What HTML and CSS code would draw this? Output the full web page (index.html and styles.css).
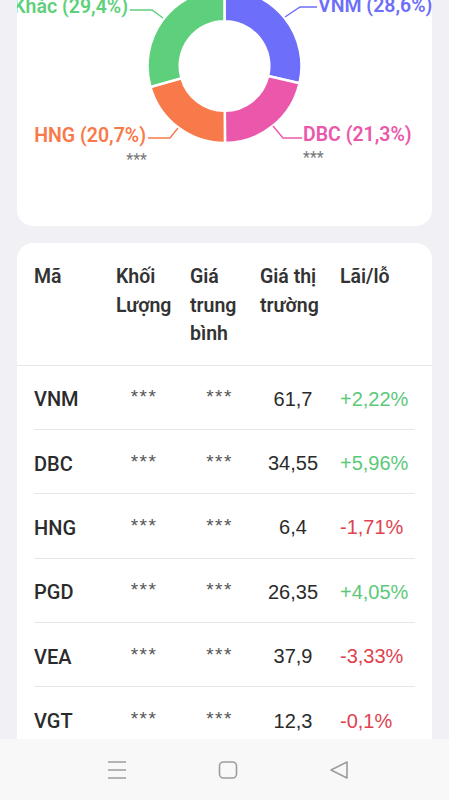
FILE: index.html
```html
<!DOCTYPE html>
<html lang="vi">
<head>
  <meta charset="UTF-8">
  <title>Danh mục</title>
  <link rel="stylesheet" href="styles.css">
</head>
<body>

  <div class="page">

    <section class="card chart-card">
      <svg class="donut" width="415" height="226" viewBox="0 0 415 226">
        <g class="slices">
          <path fill="#6d6ef9" d="M207.5 -11 A77 77 0 0 1 282.54 83.27 L251.16 76.05 A44.8 44.8 0 0 0 207.5 21.2 Z"/>
          <path fill="#eb58ab" d="M282.54 83.27 A77 77 0 0 1 207.98 143 L207.78 110.8 A44.8 44.8 0 0 0 251.16 76.05 Z"/>
          <path fill="#f87a4a" d="M207.98 143 A77 77 0 0 1 133.43 87.02 L164.4 78.23 A44.8 44.8 0 0 0 207.78 110.8 Z"/>
          <path fill="#5ed07b" d="M133.43 87.02 A77 77 0 0 1 207.5 -11 L207.5 21.2 A44.8 44.8 0 0 0 164.4 78.23 Z"/>
        </g>
        <g class="leaders">
          <polyline stroke="#5ed07b" points="113,10 135,10 146,18"/>
          <polyline stroke="#6d6ef9" points="300,7 283,7 268,17"/>
          <polyline stroke="#f87a4a" points="131,138 153,138 161,128"/>
          <polyline stroke="#eb58ab" points="285,138 266,138 256,126"/>
        </g>
        <text class="lbl" fill="#5ed07b" x="111" y="13" text-anchor="end">Khác (29,4%)</text>
        <text class="lbl" fill="#6d6ef9" x="301" y="12">VNM (28,6%)</text>
        <text class="lbl" fill="#f87a4a" x="129" y="142" text-anchor="end">HNG (20,7%)</text>
        <text class="lbl" fill="#eb58ab" x="286" y="141">DBC (21,3%)</text>
        <text class="hidden-val" x="130" y="165" text-anchor="end">***</text>
        <text class="hidden-val" x="286" y="163">***</text>
      </svg>
    </section>

    <section class="card holdings">
      <div class="thead">
        <div>Mã</div>
        <div>Khối Lượng</div>
        <div>Giá trung bình</div>
        <div>Giá thị trường</div>
        <div>Lãi/lỗ</div>
      </div>

      <div class="row">
        <div class="code">VNM</div>
        <div class="mask">***</div>
        <div class="mask">***</div>
        <div class="price">61,7</div>
        <div class="pl up">+2,22%</div>
      </div>
      <div class="row">
        <div class="code">DBC</div>
        <div class="mask">***</div>
        <div class="mask">***</div>
        <div class="price">34,55</div>
        <div class="pl up">+5,96%</div>
      </div>
      <div class="row">
        <div class="code">HNG</div>
        <div class="mask">***</div>
        <div class="mask">***</div>
        <div class="price">6,4</div>
        <div class="pl down">-1,71%</div>
      </div>
      <div class="row">
        <div class="code">PGD</div>
        <div class="mask">***</div>
        <div class="mask">***</div>
        <div class="price">26,35</div>
        <div class="pl up">+4,05%</div>
      </div>
      <div class="row">
        <div class="code">VEA</div>
        <div class="mask">***</div>
        <div class="mask">***</div>
        <div class="price">37,9</div>
        <div class="pl down">-3,33%</div>
      </div>
      <div class="row">
        <div class="code">VGT</div>
        <div class="mask">***</div>
        <div class="mask">***</div>
        <div class="price">12,3</div>
        <div class="pl down">-0,1%</div>
      </div>
    </section>

  </div>

  <nav class="navbar">
    <svg width="24" height="24" viewBox="0 0 24 24">
      <path d="M3 4h18M3 12h18M3 20h18"/>
    </svg>
    <svg width="24" height="24" viewBox="0 0 24 24">
      <rect x="3.5" y="4" width="17" height="16" rx="4"/>
    </svg>
    <svg width="24" height="24" viewBox="0 0 24 24">
      <path d="M20 4 L4 12 L20 20 Z"/>
    </svg>
  </nav>

</body>
</html>
```

FILE: styles.css
```css
body {
  margin: 0;
  background-color: #f0f0f5;
  font-family: "Liberation Sans", Arial, sans-serif;
  color: #2b2b2b;
}
.page {
  padding: 0 17px 80px;
}
.card {
  background-color: #ffffff;
  border-radius: 16px;
}
.chart-card {
  height: 226px;
  border-radius: 0 0 16px 16px;
}
.donut {
  display: block;
}
.slices path {
  stroke: #ffffff;
  stroke-width: 2.5;
}
.leaders polyline {
  fill: none;
  stroke-width: 1.4;
}
.lbl {
  font-family: Roboto, sans-serif;
  font-weight: 600;
  font-size: 19.5px;
}
.hidden-val {
  font-family: Roboto, sans-serif;
  font-size: 16px;
  fill: #777;
}

.holdings {
  margin-top: 17px;
  overflow: hidden;
}
.thead,
.row {
  display: grid;
  grid-template-columns: 82px 74px 70px 80px 75px;
}
.thead {
  padding: 20px 17px 16px;
  font-family: Roboto, sans-serif;
  font-size: 19.5px;
  line-height: 28.5px;
  font-weight: 600;
  color: #333;
  border-bottom: 1px solid #e6e6e6;
}
.row {
  margin: 0 17px;
  height: 64.4px;
  box-sizing: border-box;
  align-items: center;
  border-bottom: 1px solid #e6e6e6;
  font-size: 20px;
}
.row > div {
  text-align: center;
  padding-top: 4px;
}
.row .code {
  text-align: left;
  font-family: Roboto, sans-serif;
  font-weight: 500;
  font-size: 20px;
}
.row .mask {
  font-size: 19px;
  letter-spacing: 1.5px;
  color: #555;
  padding-top: 0;
}
.row .mask:nth-child(2) { padding-right: 18px; }
.row .mask:nth-child(3) { padding-right: 11px; }
.price {
  padding-right: 14px;
  color: #2b2b2b;
}
.pl {
  padding-right: 27px;
  white-space: nowrap;
}
.up { color: #5cc97a; }
.down { color: #e0424f; }

.navbar {
  position: fixed;
  left: 0;
  right: 0;
  bottom: 0;
  height: 61px;
  background-color: #f8f8f8;
  display: flex;
  align-items: center;
  justify-content: center;
  gap: 87px;
  padding-left: 7px;
}
.navbar svg {
  fill: none;
  stroke: #9c9c9c;
  stroke-width: 1.6;
  stroke-linejoin: round;
}
```
